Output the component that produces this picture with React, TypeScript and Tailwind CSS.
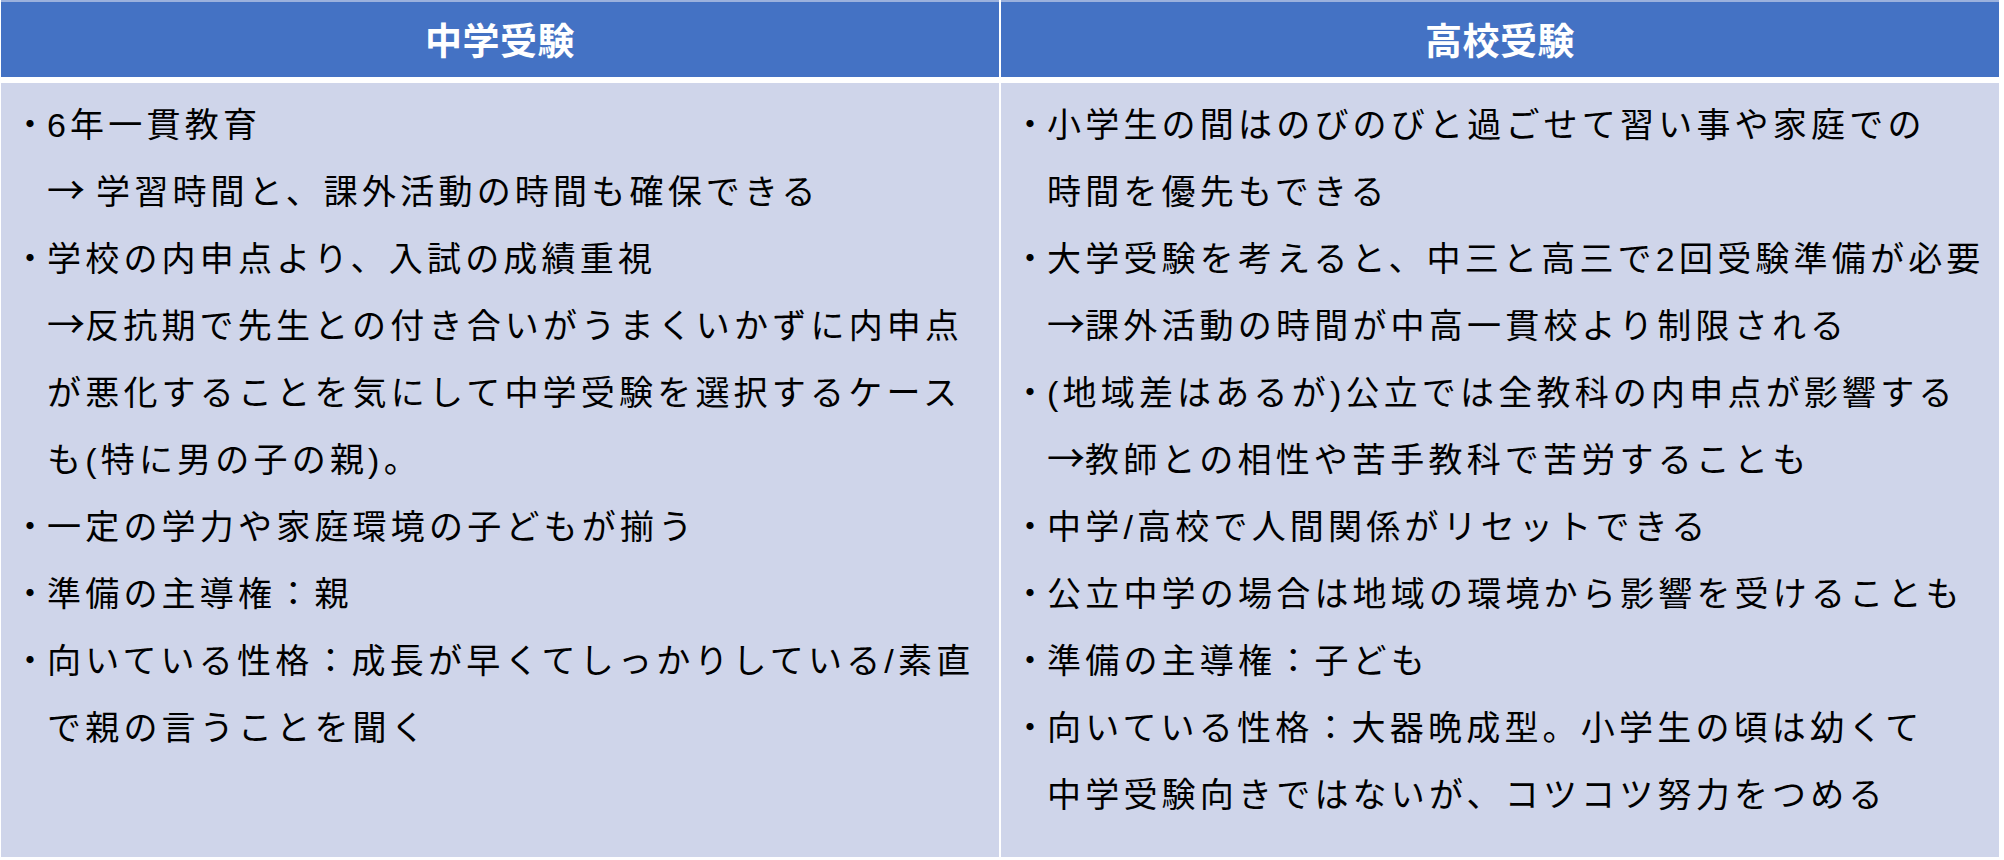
const FONT = "font-['Liberation_Sans','Noto_Sans_CJK_JP',sans-serif]";

// "→" at the start of a line is drawn as its own, full-width arrow
type Item = string[];

const junior: Item[] = [
  ["6年一貫教育", "→ 学習時間と、課外活動の時間も確保できる"],
  [
    "学校の内申点より、入試の成績重視",
    "→反抗期で先生との付き合いがうまくいかずに内申点",
    "が悪化することを気にして中学受験を選択するケース",
    "も(特に男の子の親)。",
  ],
  ["一定の学力や家庭環境の子どもが揃う"],
  ["準備の主導権：親"],
  ["向いている性格：成長が早くてしっかりしている/素直", "で親の言うことを聞く"],
];

const senior: Item[] = [
  ["小学生の間はのびのびと過ごせて習い事や家庭での", "時間を優先もできる"],
  ["大学受験を考えると、中三と高三で2回受験準備が必要", "→課外活動の時間が中高一貫校より制限される"],
  ["(地域差はあるが)公立では全教科の内申点が影響する", "→教師との相性や苦手教科で苦労することも"],
  ["中学/高校で人間関係がリセットできる"],
  ["公立中学の場合は地域の環境から影響を受けることも"],
  ["準備の主導権：子ども"],
  ["向いている性格：大器晩成型。小学生の頃は幼くて", "中学受験向きではないが、コツコツ努力をつめる"],
];

function Line({ text }: { text: string }) {
  if (text.startsWith("→")) {
    const spaced = text.startsWith("→ ");
    return (
      <div className="whitespace-nowrap">
        <span
          className={`inline-block font-['Noto_Sans_CJK_JP',sans-serif] text-[38px] leading-none tracking-normal ${spaced ? "w-[49px]" : "w-[38px]"}`}
        >
          →
        </span>
        {text.replace(/^→ ?/, "")}
      </div>
    );
  }
  return <div className="whitespace-nowrap">{text}</div>;
}

function Header({ title }: { title: string }) {
  return (
    <div className="flex h-[77px] items-center justify-center border-t-2 border-[#9bb1dd] bg-[#4472c4] pt-[6px]">
      <span className={`${FONT} text-[37px] font-bold leading-none tracking-[0.5px] text-white`}>{title}</span>
    </div>
  );
}

function Body({ items }: { items: Item[] }) {
  return (
    <div className={`${FONT} bg-[#cfd5ea] pl-[12px] pt-[9px] text-[34px] leading-[67px] tracking-[4.2px] text-black`}>
      {items.map((lines, i) => (
        <div key={i} className="flex">
          <span className="w-[34px] shrink-0 tracking-normal">・</span>
          <div>
            {lines.map((line, j) => (
              <Line key={j} text={line} />
            ))}
          </div>
        </div>
      ))}
    </div>
  );
}

export default function App() {
  return (
    <div className="h-[860px] w-[2004px] bg-white pl-[1px]">
      <div className="grid grid-cols-[998px_998px] grid-rows-[77px_774px] gap-x-[2px] gap-y-[6px]">
        <Header title="中学受験" />
        <Header title="高校受験" />
        <Body items={junior} />
        <Body items={senior} />
      </div>
    </div>
  );
}
